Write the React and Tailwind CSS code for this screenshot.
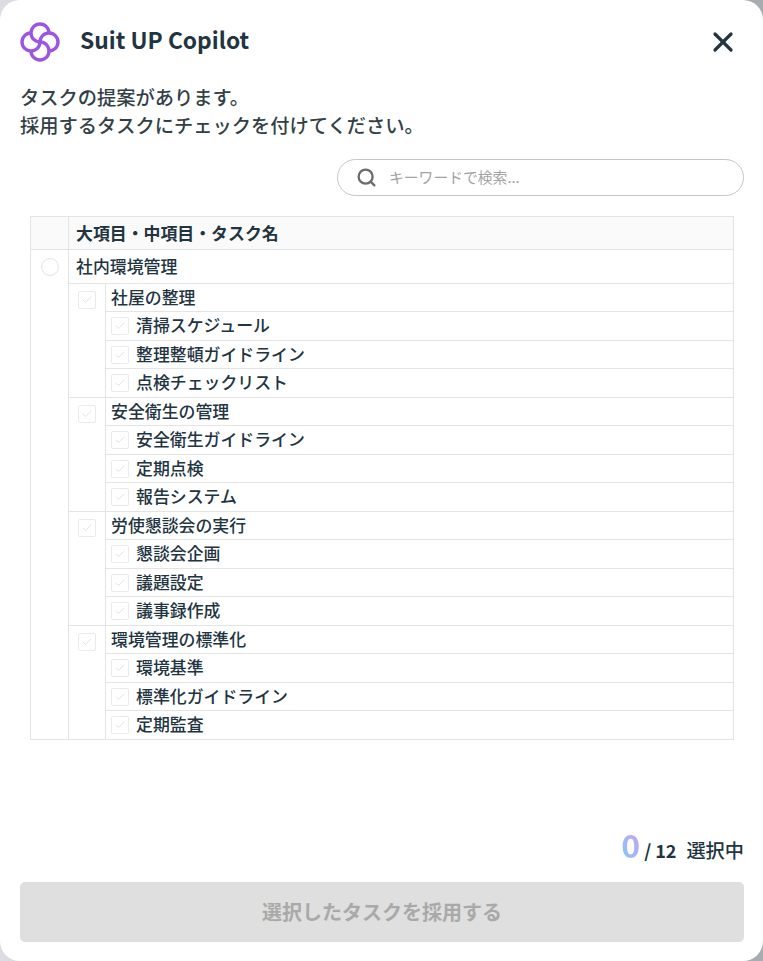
import React from 'react';
import { Search, X, Check } from 'lucide-react';

const groups = [
  { name: '社屋の整理', tasks: ['清掃スケジュール', '整理整頓ガイドライン', '点検チェックリスト'] },
  { name: '安全衛生の管理', tasks: ['安全衛生ガイドライン', '定期点検', '報告システム'] },
  { name: '労使懇談会の実行', tasks: ['懇談会企画', '議題設定', '議事録作成'] },
  { name: '環境管理の標準化', tasks: ['環境基準', '標準化ガイドライン', '定期監査'] },
];

// rows sit on a 28.5px rhythm, which lands on whole pixels as 29/28/29
const taskRowHeights = ['h-[29px]', 'h-[28px]', 'h-[29px]'];

const Logo = () => (
  <svg width="40" height="40" viewBox="0 0 40 40" fill="none" stroke="#9c55e3" strokeWidth="3.4">
    {[0, 90, 180, 270].map((deg) => (
      <path key={deg} transform={`rotate(${deg} 20 20)`} d="M20 20A9 9 0 1 1 29 11" />
    ))}
  </svg>
);

const Box = () => (
  <span className="flex h-[18px] w-[18px] items-center justify-center rounded-[2px] border border-[#e8eaec] bg-white">
    <Check className="h-3 w-3 text-[#d8dcdf]" strokeWidth={1.5} />
  </span>
);

const App = () => {
  return (
    <div className="h-[961px] w-[763px] bg-gradient-to-r from-[#dcdce4] to-[#a8acb0]" style={{ fontFamily: '"Noto Sans CJK JP", "Noto Sans", sans-serif' }}>
      <div className="flex h-full flex-col rounded-[20px] bg-white pr-[19px] pl-5 text-[#22343f]">
        {/* Header */}
        <div className="flex h-[83px] shrink-0 items-center justify-between">
          <div className="flex items-center gap-5">
            <Logo />
            <span className="-translate-y-px text-[22.8px] font-bold">Suit UP Copilot</span>
          </div>
          <X className="mr-[5px] h-[32px] w-[32px]" strokeWidth={2.4} />
        </div>

        <p className="text-[19.25px] leading-[28px] font-medium text-[#333f47]">
          タスクの提案があります。<br />採用するタスクにチェックを付けてください。
        </p>

        {/* Search */}
        <div className="mt-[20px] flex justify-end">
          <div className="flex h-[37px] w-[407px] items-center gap-[12px] rounded-full border border-[#c4c6c8] pl-[18px]">
            <Search className="h-[21px] w-[21px] text-[#6a6a6a]" strokeWidth={2.6} />
            <span className="text-[14.8px] text-[#a3a3a3]">キーワードで検索...</span>
          </div>
        </div>

        {/* Task table */}
        <table className="mt-[20px] ml-[10px] w-[704px] table-fixed border-collapse border border-[#e2e4e6] text-[16.9px] leading-[24px] font-medium">
          <colgroup>
            <col className="w-[38px]" />
            <col className="w-[37px]" />
            <col />
          </colgroup>
          <thead>
            <tr className="h-[33px] bg-[#fafafa]">
              <th className="border border-[#e2e4e6]" />
              <th colSpan={2} className="border border-[#e2e4e6] pl-[7px] text-left font-bold">大項目・中項目・タスク名</th>
            </tr>
          </thead>
          <tbody>
            <tr className="h-[34px]">
              <td rowSpan={17} className="border border-[#e2e4e6] align-top">
                <span className="mt-[8px] ml-[10px] block h-[18px] w-[18px] rounded-full border border-[#e2e4e6]" />
              </td>
              <td colSpan={2} className="border border-[#e2e4e6] pb-[1px] pl-[7px]">社内環境管理</td>
            </tr>
            {groups.map((group) => (
              <React.Fragment key={group.name}>
                <tr className="h-[28px]">
                  <td rowSpan={4} className="border border-[#e2e4e6] align-top">
                    <span className="mt-[7px] ml-[9px] block w-[18px]"><Box /></span>
                  </td>
                  <td className="border border-[#e2e4e6] pb-[1px] pl-[5px]">{group.name}</td>
                </tr>
                {group.tasks.map((task, i) => (
                  <tr key={task} className={taskRowHeights[i]}>
                    <td className="border border-[#e2e4e6] pl-[5px]">
                      <div className="flex items-center gap-[7px]">
                        <Box />
                        <span className="-translate-y-px">{task}</span>
                      </div>
                    </td>
                  </tr>
                ))}
              </React.Fragment>
            ))}
          </tbody>
        </table>

        {/* Footer */}
        <div className="mt-auto flex items-baseline justify-end font-bold">
          <span className="bg-gradient-to-tr from-[#7fc8f8] to-[#c79bf2] bg-clip-text text-[32px] leading-[38px] text-transparent">0</span>
          <span className="ml-[4px] text-[18px]">/ 12</span>
          <span className="ml-[10px] text-[19.2px] font-medium">選択中</span>
        </div>
        <div className="mt-[17px] mb-[19px] flex h-[60px] shrink-0 items-center justify-center rounded-[5px] bg-[#dfdfdf] text-[20px] font-bold text-[#a9a9a9]">
          選択したタスクを採用する
        </div>
      </div>
    </div>
  );
};

export default App;
